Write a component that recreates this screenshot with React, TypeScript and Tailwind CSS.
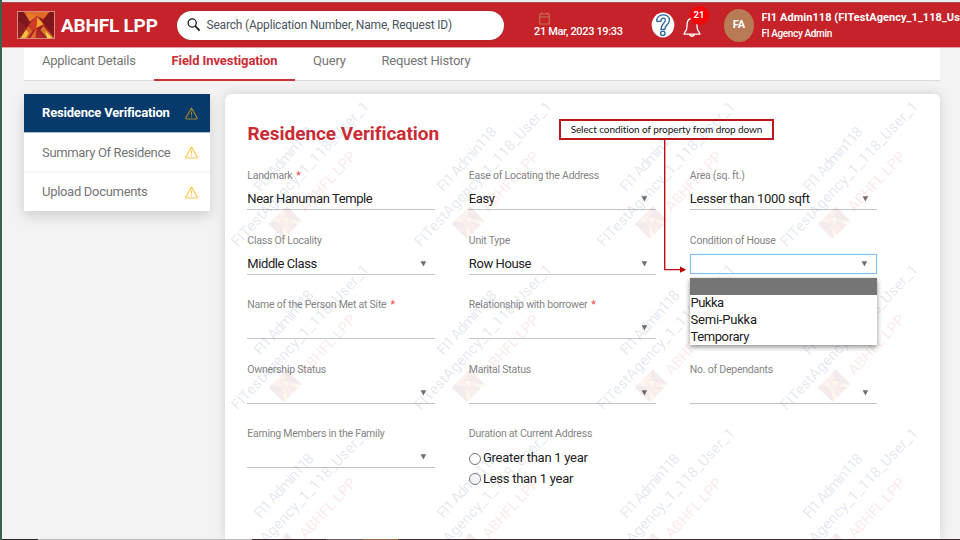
import React from "react";

type FieldProps = {
  label: string;
  value?: string;
  required?: boolean;
  select?: boolean;
  valueClass?: string;
};

function Label({ children }: { children: React.ReactNode }) {
  return (
    <div className="flex h-[14px] items-center pl-[0.3px] pt-[2px] text-[10.5px] leading-[14px] tracking-[-0.23px] text-[#858585]">
      {children}
    </div>
  );
}

function Field({ label, value, required, select = true, valueClass = "tracking-[-0.42px]" }: FieldProps) {
  return (
    <div className="h-[42px] w-[187.5px] border-b border-[#c4c4c4]">
      <Label>
        <span>{label}</span>
        {required && <span className="ml-[4px] text-[#f44336]">*</span>}
      </Label>
      <div className="mt-[8px] flex h-[18px] items-center justify-between pl-[0.3px] pr-[8px] text-[13px] text-[#222]">
        <span className={valueClass}>{value}</span>
        {select && <Caret />}
      </div>
    </div>
  );
}

function Caret() {
  return (
    <svg width="7" height="6" viewBox="0 0 7 6" className="shrink-0">
      <path d="M0.6 0.3H6.2L3.4 5.5Z" fill="#6f6f6f" />
    </svg>
  );
}

function Warning({ color }: { color: string }) {
  return (
    <svg width="13" height="13" viewBox="0 0 13 13" fill="none" stroke={color} strokeLinejoin="round">
      <path d="M6.5 1L12.2 11Q12.3 12 11.4 12H1.6Q.7 12 .8 11Z" strokeWidth="1.2" />
      <path d="M6.5 4.5V8.3M6.5 9.2V10.4" strokeWidth="1.1" />
    </svg>
  );
}

function LogoArt() {
  return (
    <g>
      <rect width="37" height="26" fill="#9c2022" />
      <path d="M4 0H33L26 7L19 4L12 7Z" fill="#e06a26" />
      <path d="M10 0L19 4L12 10L8 5Z" fill="#e67a2c" />
      <path d="M0 0H6L13 11L8 15L0 9Z" fill="#7f161d" />
      <path d="M37 0H32L25 10L30 15L37 9Z" fill="#7f161d" />
      <path d="M19 4L11 13L15 19L19 16L27 13Z" fill="#cf3d29" />
      <path d="M20 5L19 16L26 12Z" fill="#f3a332" />
      <path d="M0 9L8 14L2 24L0 24Z" fill="#8e1e22" />
      <path d="M11 14L2 26H10L15 19Z" fill="#d9652a" />
      <path d="M8 18L3 26H8L11 20Z" fill="#f5c33c" />
      <path d="M19 16L11 26H27Z" fill="#b02823" />
      <path d="M19 16L18 26H13Z" fill="#e56a2c" />
      <path d="M26 14L23 18L30 26H37Z" fill="#d9772d" />
      <path d="M28 19L30 26H35Z" fill="#f8d74d" />
      <path d="M29 14L37 9V24Z" fill="#7f161d" />
    </g>
  );
}

const tiles = [0, 1, 2].flatMap((r) => [0, 1, 2, 3].map((c) => ({ x: c * 183, y: r * 163.4 })));

function Watermark() {
  return (
    <svg
      className="pointer-events-none absolute left-0 top-0"
      width="715"
      height="445"
      viewBox="225 94 715 445"
      fontFamily="Roboto, sans-serif"
    >
      {tiles.map((t, i) => (
        <g key={i} transform={`translate(${t.x} ${t.y})`}>
          <g fill="#265ea8" fillOpacity="0.14" fontSize="15">
            <text transform="translate(260.5 192.5) rotate(-48)" textLength="81">FI1 Admin118</text>
            <text transform="translate(237.5 247.5) rotate(-46.7)" textLength="193">FITestAgency_1_118_User_1</text>
          </g>
          <text transform="translate(305.5 212.5) rotate(-47)" textLength="76" fontSize="15" fontWeight="500" fill="#e53030" fillOpacity="0.09">
            ABHFL LPP
          </text>
          <g transform="translate(269 224) rotate(-45) scale(.68 .8)" opacity="0.08">
            <LogoArt />
          </g>
        </g>
      ))}
    </svg>
  );
}

function Header() {
  return (
    <header className="flex h-[45px] shrink-0 items-center border-b border-[#e3a0a3] bg-[#c62229] text-white">
      <svg className="ml-[15px] border border-[#d98b80]" width="38" height="28" viewBox="0 0 37 26" preserveAspectRatio="none">
        <LogoArt />
      </svg>
      <span className="ml-[6px] w-[97px] pt-[3px] text-[19px] font-bold tracking-[-0.2px]">ABHFL LPP</span>
      <div className="ml-[19px] flex h-[29px] w-[327px] items-center rounded-full bg-white pl-[10px] shadow-[0_0_1px_#6b2020]">
        <svg width="14" height="14" viewBox="0 0 14 14" fill="none" stroke="#181818">
          <circle cx="5.2" cy="5" r="4.1" strokeWidth="1.3" />
          <path d="M8.2 8L12.6 12.7" strokeWidth="1.8" />
        </svg>
        <span className="ml-[5.5px] text-[12px] tracking-[-0.19px] text-[#4b5560]">Search (Application Number, Name, Request ID)</span>
      </div>
      <div className="ml-[30px] flex w-[90px] flex-col">
        <svg className="ml-[5px]" width="11" height="13" viewBox="0 0 11 13" fill="none" stroke="#bf7350">
          <path d="M.7 2H10.3V12H.7ZM.7 5H10.3M3 .3V2M8 .3V2" strokeWidth="1.1" />
        </svg>
        <span className="text-[11px] font-medium leading-[14px] tracking-[-0.34px]">21 Mar, 2023 19:33</span>
      </div>
      <svg className="ml-[27px]" width="24" height="26" viewBox="0 0 24 26" fill="none">
        <ellipse cx="12" cy="13" rx="11.3" ry="12.4" fill="#fff" />
        <path d="M5.8 9.3C5 1.2 18.4 .6 18.4 8.3C18.4 12.6 13.8 12.9 13.8 17.4H10C10 11.6 14.3 11.4 14.3 8.3C14.3 5.2 9.8 5.4 9.9 9.3Z" stroke="#2d6799" strokeWidth="1.3" strokeLinejoin="round" />
        <circle cx="11.8" cy="21.3" r="2.2" fill="#fff" stroke="#2d6799" strokeWidth="1.4" />
      </svg>
      <div className="relative ml-[8px] h-[30px] w-[26px]">
        <svg className="absolute left-0 top-[5px]" width="18" height="24" viewBox="0 0 18 24" fill="none" stroke="#fff" strokeWidth="1.3">
          <path d="M9 3.5C5.5 3.5 4.3 6 4.1 9L3.8 13C3.6 16 1.3 17 1.1 19.2H16.9C16.7 17 14.4 16 14.2 13L13.9 9C13.7 6 12.5 3.5 9 3.5Z" />
          <path d="M6.5 19.5Q9 23 11.5 19.5" />
        </svg>
        <span className="absolute left-[6.5px] top-[-4px] flex h-[19px] w-[19px] items-center justify-center rounded-full bg-[#fb0007] text-[9.5px] font-bold">21</span>
      </div>
      <div className="ml-[15px] flex h-[33px] w-[30px] shrink-0 items-center justify-center rounded-[50%] bg-[#b87b55] text-[11px] font-bold">FA</div>
      <div className="ml-[7.5px] w-[198px] overflow-hidden whitespace-nowrap pt-[2px]">
        <div className="text-[11px] font-bold leading-[16px] tracking-[0.05px]">FI1 Admin118 (FITestAgency_1_118_User_1)</div>
        <div className="text-[10px] font-medium leading-[16px] tracking-[-0.36px]">FI Agency Admin</div>
      </div>
    </header>
  );
}

export default function App() {
  return (
    <div className="flex h-[540px] w-[960px] flex-col overflow-hidden whitespace-nowrap border-l-2 border-[#3e634c] bg-[#f3f3f3] font-[Roboto,sans-serif]">
      <div className="h-[2px] shrink-0 bg-[#e9edef]" />
      <div className="h-px shrink-0 bg-[#b34a50]" />
      <Header />

      <nav className="ml-[22px] flex h-[33px] w-[916px] shrink-0 border-b border-[#dcdcdc] bg-white text-[13px] text-[#757575]">
        <span className="ml-[18px] w-[112px] pt-[3px] tracking-[-0.24px]">Applicant Details</span>
        <span className="h-[33px] w-[141px] border-b-2 border-[#cc3339] pl-[17.5px] pt-[3px] font-bold tracking-[-0.09px] text-[#cb2c34]">Field Investigation</span>
        <span className="w-[68px] pl-[18px] pt-[3px] tracking-[-0.2px]">Query</span>
        <span className="pl-[18.5px] pt-[3px] tracking-[-0.2px]">Request History</span>
      </nav>

      <div className="ml-[22px] mt-[13px] flex min-h-0 flex-1 gap-[15px]">
        <aside className="h-[117px] w-[186px] shrink-0 bg-white text-[13px] text-[#757575] shadow-[0_5px_12px_rgba(0,0,0,0.15)]">
          <div className="flex h-[39px] items-center justify-between border-b border-[#aebccc] bg-[#063a6b] pl-[18px] pr-[12px] font-bold text-white">
            <span className="tracking-[-0.19px]">Residence Verification</span>
            <Warning color="#a4842d" />
          </div>
          <div className="flex h-[40px] items-center justify-between border-b-2 border-[#f7f7f7] pl-[18px] pr-[12px]">
            <span className="pt-[2px] tracking-[-0.34px]">Summary Of Residence</span>
            <Warning color="#ffc54d" />
          </div>
          <div className="flex h-[38px] items-center justify-between pl-[18px] pr-[12px]">
            <span className="tracking-[-0.3px]">Upload Documents</span>
            <Warning color="#ffc54d" />
          </div>
        </aside>

        <main className="relative w-[715px] shrink-0 rounded-t-[6px] bg-white pl-[22px] pt-[28px] shadow-[0_0_12px_rgba(0,0,0,0.15)]">
          <h1 className="h-[24px] pl-[0.5px] text-[19px] font-bold leading-[24px] tracking-[-0.05px] text-[#cb2c34]">Residence Verification</h1>

          <div className="mt-[22px] grid auto-rows-[64.6px] grid-cols-[221.5px_221px_188px]">
            <Field label="Landmark" value="Near Hanuman Temple" required select={false} />
            <Field label="Ease of Locating the Address" value="Easy" />
            <Field label="Area (sq. ft.)" value="Lesser than 1000 sqft" valueClass="tracking-[-0.29px]" />

            <Field label="Class Of Locality" value="Middle Class" />
            <Field label="Unit Type" value="Row House" />
            <div className="relative h-[42px] w-[187.5px]">
              <Label>Condition of House</Label>
              <div className="mt-[7px] flex h-[20px] items-center justify-end border border-[#85c2fa] pr-[8.5px] pt-px shadow-[0_0_1px_#90caf9]">
                <Caret />
              </div>
              <ul className="absolute left-0 top-[45px] z-20 h-[67px] w-[187.5px] bg-white text-[13px] leading-[16.8px] text-[#222] shadow-[0_2px_5px_rgba(0,0,0,0.45)]">
                <li className="mb-[0.4px] h-[17px] bg-[#757575]" />
                <li className="pl-px tracking-[-0.5px]">Pukka</li>
                <li className="pl-px tracking-[-0.2px]">Semi-Pukka</li>
                <li className="pl-px tracking-[-0.4px]">Temporary</li>
              </ul>
            </div>

            <Field label="Name of the Person Met at Site" required select={false} />
            <Field label="Relationship with borrower" required />
            <div />

            <Field label="Ownership Status" />
            <Field label="Marital Status" />
            <Field label="No. of Dependants" />

            <Field label="Earning Members in the Family" />
            <div>
              <Label>Duration at Current Address</Label>
              <div className="mt-[8px] flex flex-col text-[13px] leading-[20.5px] tracking-[-0.27px] text-[#222]">
                {["Greater than 1 year", "Less than 1 year"].map((t) => (
                  <label key={t} className="flex items-center gap-[2.5px]">
                    <span className="h-[12px] w-[12px] rounded-full border border-[#767676] bg-white" />
                    {t}
                  </label>
                ))}
              </div>
            </div>
          </div>

          <Watermark />

          <div className="absolute left-[334px] top-[25px] flex h-[21px] w-[215px] items-center justify-center border-2 border-[#bd171d] font-[Lato,sans-serif] text-[10px] tracking-[-0.09px] text-[#151515]">
            Select condition of property from drop down
          </div>
          <svg className="absolute left-[438px] top-[46px]" width="26" height="136" viewBox="0 0 26 136" fill="none">
            <path d="M1.7 0V129.6H18" stroke="#c00d14" strokeWidth="1.4" />
            <path d="M17 126.6V132.8L23.2 129.7Z" fill="#c00000" />
          </svg>
        </main>
      </div>

      <div className="z-10 flex h-px shrink-0">
        <span className="w-[36px] bg-[#222]" />
        <span className="w-[214px] bg-[#b9b9b9]" />
        <span className="w-[74px] bg-[#3f2b30]" />
        <span className="w-[37px] bg-[#695b60]" />
        <span className="w-[35px] bg-[#a86c49]" />
        <span className="flex-1 bg-[#3f2b30]" />
      </div>
    </div>
  );
}
